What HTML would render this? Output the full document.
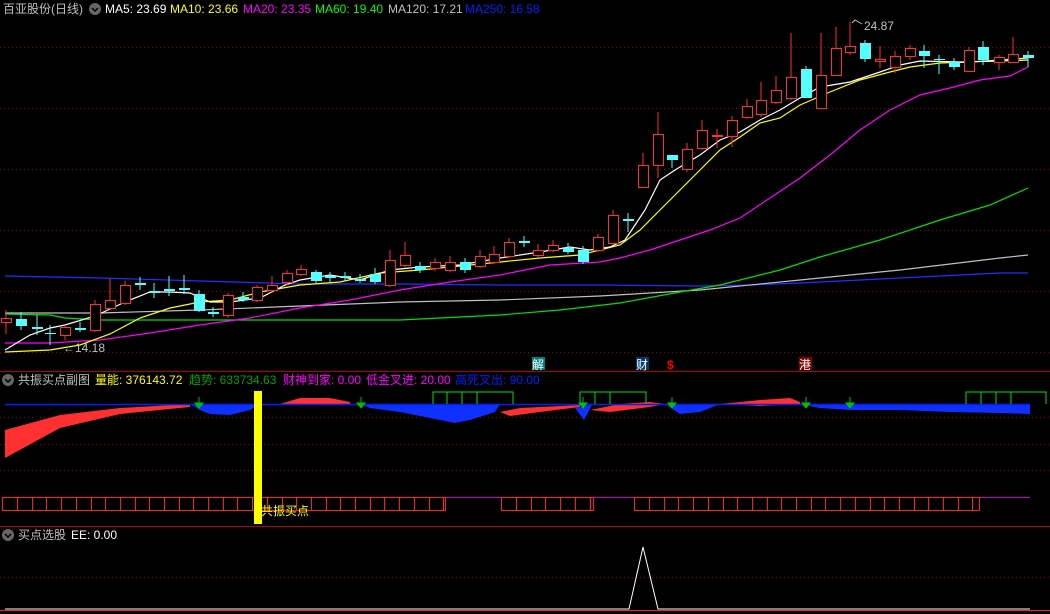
<!DOCTYPE html>
<html><head><meta charset="utf-8"><style>
html,body{margin:0;padding:0;background:#000;width:1050px;height:614px;overflow:hidden}
svg{display:block}
text{font-family:"Liberation Sans","Noto Sans CJK SC",sans-serif;font-size:12px}
</style></head><body>
<svg id="s" width="1050" height="614" xmlns="http://www.w3.org/2000/svg">
<rect width="1050" height="614" fill="#000"/>
<g stroke="#8a0000" stroke-dasharray="1,3" stroke-width="1">
<line x1="0" y1="47.5" x2="1050" y2="47.5"/><line x1="0" y1="108.5" x2="1050" y2="108.5"/>
<line x1="0" y1="169.5" x2="1050" y2="169.5"/><line x1="0" y1="230.5" x2="1050" y2="230.5"/>
<line x1="0" y1="291.5" x2="1050" y2="291.5"/><line x1="0" y1="352.5" x2="1050" y2="352.5"/>
<line x1="0" y1="417.5" x2="1050" y2="417.5"/><line x1="0" y1="444.5" x2="1050" y2="444.5"/><line x1="0" y1="470.5" x2="1050" y2="470.5"/>
<line x1="0" y1="577.5" x2="1050" y2="577.5"/>
</g>
<line x1="0" y1="371.5" x2="1050" y2="371.5" stroke="#b00000"/>
<line x1="0" y1="526.5" x2="1050" y2="526.5" stroke="#b00000"/>
<g fill="none" stroke-width="1.2">
<polyline stroke="#2030ff" points="5,276 100,278 200,281 300,284 400,284 500,285 600,285 700,286 750,285 800,283 900,278 1000,273 1028,273"/>
<polyline stroke="#c0c0c0" points="5,313 100,313 200,310 300,306 400,302 500,300 600,296 700,290 800,280 900,270 1000,258 1028,255"/>
<polyline stroke="#00e000" points="5,314 50,315 65,318 100,320 150,320 250,320 400,320 500,315 560,310 620,303 680,292 720,285 780,270 820,257 880,240 940,220 990,205 1028,188"/>
<polyline stroke="#ff00ff" points="5,343 50,343 100,340 150,333 200,325 250,318 300,308 350,300 400,290 450,282 500,275 550,265 600,262 620,258 650,250 680,240 710,230 740,218 770,198 800,178 830,155 860,130 890,110 920,95 950,88 980,80 1010,76 1028,67"/>
<polyline stroke="#ffff00" points="5,352 50,350 80,345 110,334 140,318 170,308 200,302 230,300 260,292 300,285 340,282 380,273 420,270 460,266 500,262 540,258 580,255 620,245 640,230 660,210 680,190 700,170 720,150 740,137 760,123 780,118 800,105 830,92 860,80 890,72 910,67 940,63 970,62 1000,60 1028,58"/>
<polyline stroke="#ffffff" points="5,350 30,335 50,328 65,325 95,316 125,302 150,292 170,292 190,293 210,302 230,302 260,298 285,285 300,280 330,275 360,280 390,270 420,267 460,265 500,258 540,252 570,247 590,250 610,247 625,240 645,210 660,180 675,170 700,155 720,140 740,132 760,120 780,110 800,98 820,87 850,82 880,72 900,65 920,61 960,62 1000,61 1028,60"/>
</g>
<g id="c"></g>
<text x="63" y="352" fill="#c0c0c0">←14.18</text>
<text x="864" y="30" fill="#c0c0c0">24.87</text>
<polyline points="862,24 855,20 852,23" fill="none" stroke="#c0c0c0"/>
<text x="3" y="13" fill="#c0c0c0">百亚股份(日线)</text>
<circle cx="95" cy="9" r="6" fill="#666"/><path d="M92,8 l3,3 l3,-3" stroke="#000" fill="none" stroke-width="1.5"/>
<text x="105" y="13" fill="#fff">MA5: 23.69</text>
<text x="170" y="13" fill="#ffff00">MA10: 23.66</text>
<text x="243" y="13" fill="#ff00ff">MA20: 23.35</text>
<text x="315" y="13" fill="#00ff00">MA60: 19.40</text>
<text x="388" y="13" fill="#c0c0c0">MA120: 17.21</text>
<text x="465" y="13" fill="#0020ff">MA250: 16.58</text>
<rect x="532" y="357" width="13" height="13" fill="#008080"/><text x="532" y="369" fill="#fff">解</text>
<rect x="636" y="357" width="13" height="13" fill="#003a6a"/><text x="636" y="369" fill="#fff">财</text>
<text x="667" y="369" fill="#ff0000" font-weight="bold">$</text>
<rect x="799" y="357" width="13" height="13" fill="#800000"/><text x="799" y="369" fill="#fff">港</text>
<circle cx="8" cy="380" r="6" fill="#666"/><path d="M5,379 l3,3 l3,-3" stroke="#000" fill="none" stroke-width="1.5"/>
<text x="18" y="384" fill="#c0c0c0">共振买点副图</text>
<text x="95" y="384" fill="#ffff00">量能: 376143.72</text>
<text x="189" y="384" fill="#00a000">趋势: 633734.63</text>
<text x="283" y="384" fill="#ff00ff">财神到家: 0.00</text>
<text x="366" y="384" fill="#ff00ff">低金叉进: 20.00</text>
<text x="455" y="384" fill="#0020ff">高死叉出: 90.00</text>
<g fill="#ff3030">
<polygon points="5,430 60,415 120,408 190,404 190,407 120,414 60,428 5,458"/>
<polygon points="280,404 300,398 330,398 350,402 350,404"/>
<polygon points="500,412 520,408 560,406 580,405 580,407 540,412 510,416"/>
<polygon points="590,410 620,404 650,402 665,404 650,407 610,412"/>
<polygon points="720,404 760,400 790,398 800,402 800,404 760,406"/>
</g>
<g fill="#1030ff">
<polygon points="190,404 260,404 250,410 230,415 210,414 200,410"/>
<polygon points="360,404 500,404 495,412 470,420 455,423 430,418 400,412 370,408"/>
<polygon points="575,408 592,405 584,420"/>
<polygon points="665,404 720,404 700,412 680,414"/>
<polygon points="800,404 1030,404 1030,414 1000,413 950,412 900,410 850,410 820,408"/>
</g>
<line x1="5" y1="404.5" x2="1030" y2="404.5" stroke="#0020ff" stroke-width="1.5"/>
<g fill="none" stroke="#00e000">
<path d="M433,404V392H513V404M447,392V404M462,392V404M477,392V404"/>
<path d="M580,404V392H646V404M595,392V404M610,392V404"/>
<path d="M966,404V392H1046V404M981,392V404M996,392V404M1011,392V404"/>
</g>
<g fill="#00c000" stroke="#00c000">
<path d="M199,397v6M361,397v6M583,397v6M672,397v6M806,397v6M850,397v6" />
<path d="M195,403h8l-4,5zM357,403h8l-4,5zM579,403h8l-4,5zM668,403h8l-4,5zM802,403h8l-4,5zM846,403h8l-4,5z"/>
</g>
<line x1="5" y1="497.5" x2="1030" y2="497.5" stroke="#c000c0"/>
<g id="rb" fill="none" stroke="#ff2020"></g>
<rect x="254" y="391" width="8" height="133" fill="#ffff00"/>
<text x="261" y="515" fill="#ffff00">共振买点</text>
<circle cx="8" cy="535" r="6" fill="#666"/><path d="M5,534 l3,3 l3,-3" stroke="#000" fill="none" stroke-width="1.5"/>
<text x="18" y="539" fill="#c0c0c0">买点选股</text>
<text x="71" y="539" fill="#fff">EE: 0.00</text>
<polyline points="5,609 629,609 643,547 658,609 1030,609" fill="none" stroke="#fff"/>
<line x1="0" y1="610.5" x2="1050" y2="610.5" stroke="#ff2020"/>
</svg>
<script>
var C=[[6,'r',318,322,310,334],[21,'c',319,326,312,330],[37,'c',327,329,315,335],[50,'c',333,334,325,345],[65,'r',327,335,325,340],[80,'c',328,330,322,332],[95,'r',304,330,300,332],[110,'r',300,308,279,310],[125,'r',285,303,281,305],[140,'c',283,285,277,290],[154,'c',291,293,283,298],[169,'c',289,291,276,296],[184,'c',288,290,275,294],[199,'c',294,311,290,312],[213,'c',312,314,307,317],[228,'r',295,315,293,318],[243,'c',297,300,292,302],[257,'r',287,300,285,302],[272,'r',285,290,276,293],[287,'r',273,282,270,285],[301,'r',269,274,265,276],[316,'c',272,281,270,283],[330,'c',276,278,272,282],[345,'c',276,278,272,281],[360,'c',279,281,274,283],[375,'c',274,282,268,284],[390,'r',260,285,250,287],[405,'r',255,265,242,268],[420,'c',266,270,262,273],[435,'r',262,268,258,271],[450,'r',262,270,256,272],[465,'c',262,270,258,273],[480,'r',256,266,250,268],[494,'r',254,262,246,264],[509,'r',242,256,238,258],[524,'c',241,243,236,247],[538,'r',250,255,244,257],[553,'r',245,250,240,252],[568,'c',248,252,243,254],[583,'c',250,262,246,264],[598,'r',237,250,234,252],[613,'r',215,243,210,245],[628,'c',219,221,213,232],[643,'r',165,187,153,188],[658,'r',134,165,112,178],[672,'c',155,160,155,168],[687,'r',149,169,143,172],[702,'r',130,148,120,150],[717,'r',135,136,129,148],[732,'r',120,136,116,147],[747,'r',106,117,99,119],[761,'r',100,114,82,117],[776,'r',90,102,76,104],[791,'r',77,98,33,100],[806,'c',69,98,66,98],[821,'r',75,108,33,109],[836,'r',48,75,27,76],[850,'r',46,52,22,55],[865,'c',43,59,40,62],[880,'r',59,61,46,68],[895,'r',56,67,51,73],[910,'r',48,56,45,60],[924,'c',51,56,45,68],[939,'c',59,60,55,74],[954,'c',62,67,58,70],[969,'r',50,71,47,72],[983,'c',47,60,41,65],[999,'r',57,62,55,70],[1013,'r',54,62,37,63],[1028,'c',55,58,51,67]];
var g=document.getElementById('c'),h='';
C.forEach(function(k){var x=k[0],col=k[1]=='r'?'#ff3030':'#55ffff',t=k[2],b=k[3];if(b-t<1)b=t+1;
h+='<line x1="'+x+'" y1="'+k[4]+'" x2="'+x+'" y2="'+k[5]+'" stroke="'+col+'"/>';
if(k[1]=='r'){h+='<line x1="'+x+'" y1="'+t+'" x2="'+x+'" y2="'+b+'" stroke="#000" stroke-width="9"/><rect x="'+(x-5)+'.5" y="'+t+'.5" width="10" height="'+(b-t)+'" fill="#000" stroke="'+col+'"/>';}
else h+='<rect x="'+(x-5)+'" y="'+t+'" width="11" height="'+(b-t)+'" fill="'+col+'"/>';});
g.innerHTML=h;
var rb=document.getElementById('rb'),s='';
[[2,445],[501,593],[634,979]].forEach(function(r){s+='<rect x="'+r[0]+'.5" y="497.5" width="'+(r[1]-r[0])+'" height="13"/>';for(var x=r[0]+15;x<r[1];x+=14.7)s+='<line x1="'+Math.round(x)+'.5" y1="497" x2="'+Math.round(x)+'.5" y2="510"/>';});
rb.innerHTML=s;
</script>
</body></html>
